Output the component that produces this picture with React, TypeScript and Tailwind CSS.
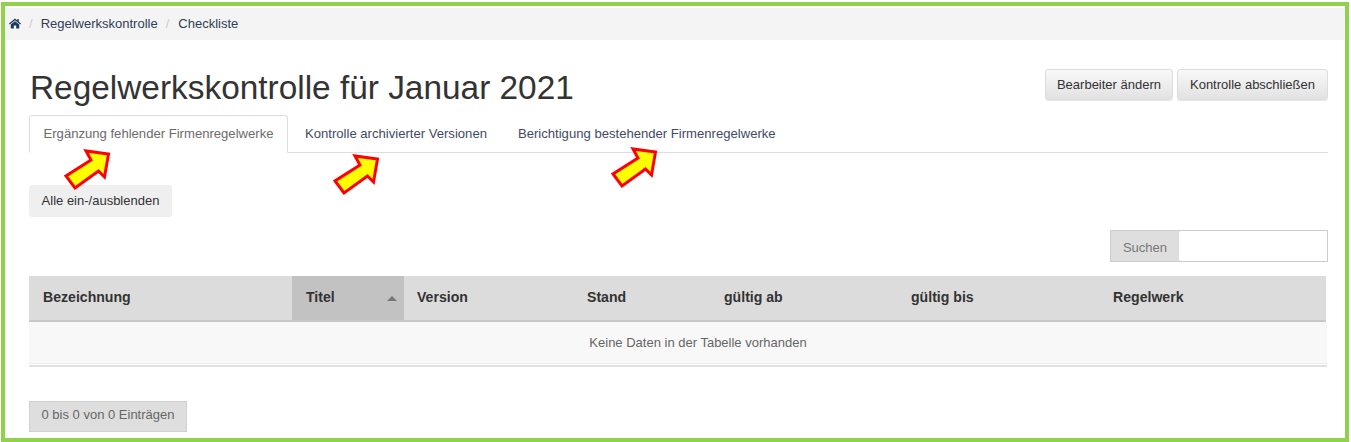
import React from 'react';

const Arrow = ({ className }: { className: string }) => (
  <svg className={className} width="54" height="46" viewBox="0 0 54 46">
    <path d="M48.5 8 L44.5 31 L38.5 25 L15 42 L6 30 L31 14 L26 5 Z" fill="#ffff00" stroke="#ff0000" strokeWidth="3" />
  </svg>
);

const columns = [
  { label: 'Bezeichnung', w: 'w-[263px]', pad: 'pl-[14px]' },
  { label: 'Titel', w: 'w-[112px]', pad: 'pl-[14px]', sorted: true },
  { label: 'Version', w: 'w-[170px]', pad: 'pl-[13px]' },
  { label: 'Stand', w: 'w-[137px]', pad: 'pl-[13px]' },
  { label: 'gültig ab', w: 'w-[187px]', pad: 'pl-[13px]' },
  { label: 'gültig bis', w: 'w-[202px]', pad: 'pl-[13px]' },
  { label: 'Regelwerk', w: 'flex-1', pad: 'pl-[13px]' },
];

export default function App() {
  return (
    <div className="w-[1351px] h-[442px] bg-white pl-px pt-[2px] pr-[2px] font-['Liberation_Sans',Arial,sans-serif] text-[#333]">
      <div className="relative h-[440px] border-4 border-[#92d050] bg-white pt-[2px] overflow-hidden">
        {/* Breadcrumb */}
        <div className="h-[32px] bg-[#f4f4f4] flex items-center pl-[4px] text-[13px] text-[#2f3e56] gap-[8px]">
          <svg width="12" height="11" viewBox="0 0 12 11" className="text-[#1c3a5e] -mt-[2px]">
            <path fill="currentColor" d="M6 0.5 L0 5.6 L0.8 6.5 L6 2.2 L11.2 6.5 L12 5.6 L9.8 3.8 V1 H8.4 V2.5 Z M1.8 6.6 V10.5 H4.8 V7.5 H7.2 V10.5 H10.2 V6.6 L6 3.2 Z" />
          </svg>
          <span className="text-[#ccc]">/</span>
          <span>Regelwerkskontrolle</span>
          <span className="text-[#ccc]">/</span>
          <span className="ml-px">Checkliste</span>
        </div>

        <div className="pl-[24px] pr-[17px]">
          {/* Title row */}
          <div className="flex items-start justify-between h-[75px]">
            <h1 className="mt-[27px] ml-px text-[33.4px] leading-[42px] text-[#333] font-normal">Regelwerkskontrolle für Januar 2021</h1>
            <div className="flex gap-[4px] mt-[29px]">
              <button className="h-[31px] w-[128px] text-[13px] text-[#333] rounded-[3px] border border-[#ddd] bg-gradient-to-b from-[#f8f8f8] to-[#e2e2e2] shadow-[0_1px_1px_rgba(0,0,0,0.1)]">Bearbeiter ändern</button>
              <button className="h-[31px] w-[151px] text-[13px] text-[#333] rounded-[3px] border border-[#ddd] bg-gradient-to-b from-[#f8f8f8] to-[#e2e2e2] shadow-[0_1px_1px_rgba(0,0,0,0.1)]">Kontrolle abschließen</button>
            </div>
          </div>

          {/* Tabs */}
          <div className="flex h-[38px] border-b border-[#ddd] text-[13.1px] text-[#3f4a63]">
            <div className="w-[259px] h-[38px] flex items-center justify-center rounded-t-[3px] border border-[#ddd] border-b-white bg-white text-[#6b6b6b]">Ergänzung fehlender Firmenregelwerke</div>
            <div className="ml-[17px] flex items-center">Kontrolle archivierter Versionen</div>
            <div className="ml-[31px] flex items-center">Berichtigung bestehender Firmenregelwerke</div>
          </div>

          <button className="mt-[32px] block h-[32px] w-[143px] rounded-[3px] bg-[#efefef] text-[13px] text-[#333]">Alle ein-/ausblenden</button>

          {/* Search */}
          <div className="mt-[13px] flex justify-end">
            <div className="flex h-[32px] w-[218px] border border-[#ccc] bg-[#dedede]">
              <span className="w-[68px] pt-[3px] flex items-center justify-center text-[13px] text-[#777]">Suchen</span>
              <div className="flex-1 bg-white rounded-l-[2px]" />
            </div>
          </div>

          {/* Table */}
          <div className="mt-[14px] mr-[2px]">
            <div className="flex h-[46px] bg-[#dcdcdc] border-b-2 border-[#c8c8c8] text-[14.1px] font-bold text-[#333]">
              {columns.map((c) => (
                <div key={c.label} className={`${c.w} ${c.pad} relative flex items-center ${c.sorted ? 'bg-[#c2c2c2]' : ''}`}>
                  {c.label}
                  {c.sorted && <span className="absolute right-[7px] top-[20px] border-x-[5px] border-b-[5px] border-x-transparent border-b-[#777]" />}
                </div>
              ))}
            </div>
          </div>
          <div className="h-[42px] mr-px pl-[40px] bg-[#f8f8f8] border-b border-[#ececec] flex items-center justify-center text-[13px] text-[#666]">Keine Daten in der Tabelle vorhanden</div>
          <div className="h-[3px] mr-px border-b-2 border-[#e0e0e0]" />

          <div className="mt-[34px] h-[31px] w-[158px] pb-[3px] flex items-center justify-center bg-[#dedede] border border-[#d0d0d0] text-[13px] text-[#666]">0 bis 0 von 0 Einträgen</div>
        </div>

        {/* Annotation arrows */}
        <Arrow className="absolute left-[55px] top-[140px]" />
        <Arrow className="absolute left-[324px] top-[145px]" />
        <Arrow className="absolute left-[602px] top-[138px]" />
      </div>
    </div>
  );
}
